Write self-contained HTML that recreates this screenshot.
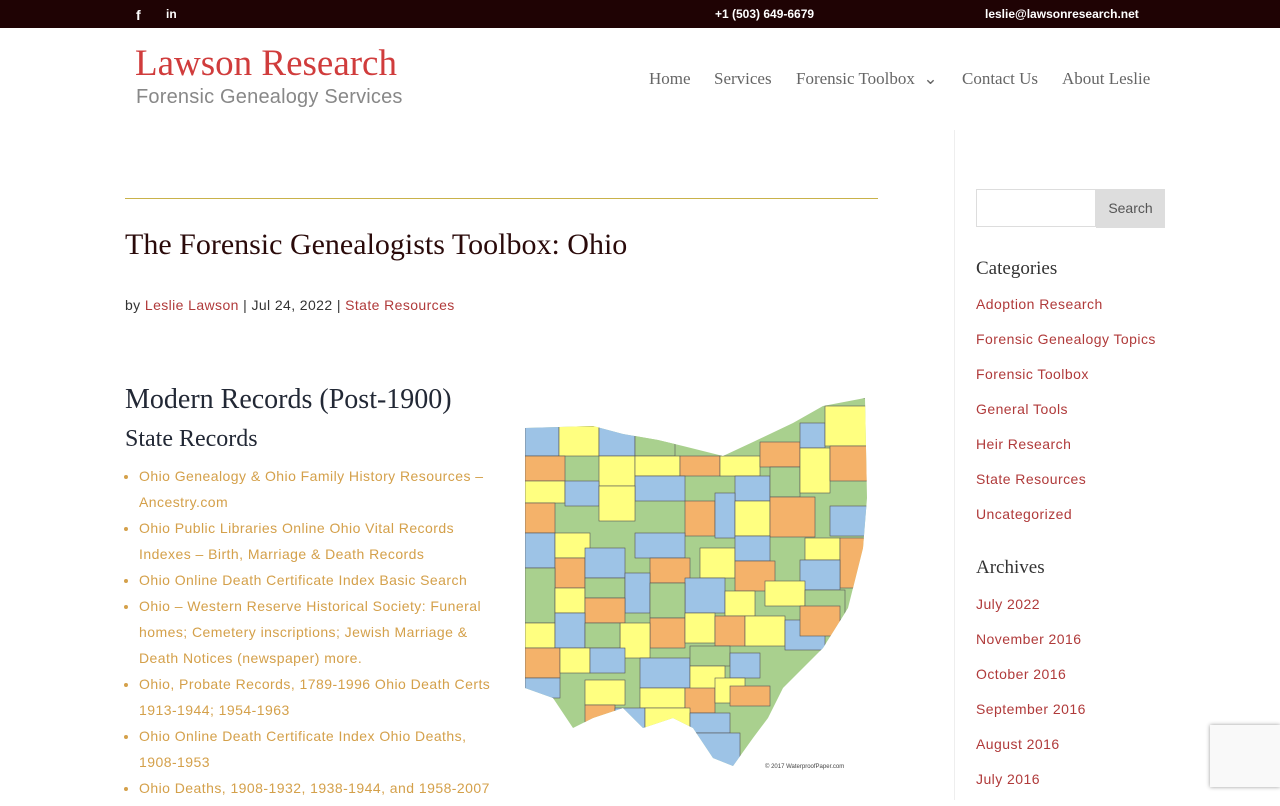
<!DOCTYPE html>
<html><head><meta charset="utf-8"><style>
body{margin:0;background:#fff;font-family:"Liberation Sans",sans-serif;width:1280px;height:800px;overflow:hidden;position:relative}
.top{position:absolute;left:0;top:0;width:1280px;height:28px;background:#1f0304;color:#fff;font-size:12px;font-weight:bold}
.top span{position:absolute;top:7px}
.serif{font-family:"Liberation Serif",serif}
.logo1{position:absolute;left:135px;top:42px;font-size:37px;color:#d03c3c}
.logo2{position:absolute;left:136px;top:86px;font-size:20px;color:#888;letter-spacing:0.2px}
.nav{position:absolute;top:69px;font-size:17px;color:#666}
.rule{position:absolute;left:125px;top:198px;width:753px;height:1px;background:#c9b24a}
h1{position:absolute;left:125px;top:228px;margin:0;font-weight:normal;font-size:30px;color:#2a0a0a}
.meta{position:absolute;left:125px;top:297px;font-size:14px;color:#333;letter-spacing:0.4px}
.meta a{color:#b03a3a}
h2{position:absolute;left:125px;top:384px;margin:0;font-weight:normal;font-size:28px;color:#222835}
h3{position:absolute;left:125px;top:426px;margin:0;font-weight:normal;font-size:24px;color:#222835}
ul{position:absolute;left:125px;top:463px;margin:0;padding:0 0 0 14px;width:352px;font-size:14px;line-height:26px;color:#333;letter-spacing:0.45px}
ul li{color:#d4a04a;list-style:disc}
.side{position:absolute;left:954px;top:130px;width:1px;height:670px;background:#eee}
.sb{position:absolute;left:976px}
.sb a{display:block;color:#b03a3a;font-size:14px;height:35px;letter-spacing:0.45px}
.sh{font-size:19px;color:#333}
</style></head><body>
<div class="top"><span style="left:136px;font-size:14px;font-weight:900">f</span><span style="left:166px;font-weight:900">in</span><span style="left:715px">+1 (503) 649-6679</span><span style="left:985px">leslie@lawsonresearch.net</span></div>
<div class="logo1 serif">Lawson Research</div>
<div class="logo2">Forensic Genealogy Services</div>
<div class="nav serif" style="left:649px">Home</div>
<div class="nav serif" style="left:714px">Services</div>
<div class="nav serif" style="left:796px">Forensic Toolbox &nbsp;⌄</div>
<div class="nav serif" style="left:962px">Contact Us</div>
<div class="nav serif" style="left:1062px">About Leslie</div>
<div class="rule"></div>
<h1 class="serif">The Forensic Genealogists Toolbox: Ohio</h1>
<div class="meta">by <a>Leslie Lawson</a> | Jul 24, 2022 | <a>State Resources</a></div>
<h2 class="serif">Modern Records (Post-1900)</h2>
<h3 class="serif">State Records</h3>
<ul>
<li>Ohio Genealogy &amp; Ohio Family History Resources – Ancestry.com</li>
<li>Ohio Public Libraries Online Ohio Vital Records Indexes – Birth, Marriage &amp; Death Records</li>
<li>Ohio Online Death Certificate Index Basic Search</li>
<li>Ohio – Western Reserve Historical Society: Funeral homes; Cemetery inscriptions; Jewish Marriage &amp; Death Notices (newspaper) more.</li>
<li>Ohio, Probate Records, 1789-1996 Ohio Death Certs 1913-1944; 1954-1963</li>
<li>Ohio Online Death Certificate Index Ohio Deaths, 1908-1953</li>
<li>Ohio Deaths, 1908-1932, 1938-1944, and 1958-2007</li>
</ul>
<svg style="position:absolute;left:523px;top:398px" width="346" height="374">
<defs><clipPath id="oh"><polygon points="2,30 70,28 100,36 135,42 160,48 200,58 230,44 270,25 300,8 342,0 344,100 340,150 325,210 300,250 280,270 260,290 245,320 230,340 210,368 190,360 170,330 150,320 120,330 100,310 70,320 50,330 30,300 2,290"/></clipPath></defs>
<g clip-path="url(#oh)" stroke="#555" stroke-width="0.6">
<rect x="0" y="0" width="346" height="374" fill="#a9d08e"/>
<rect x="2" y="28" width="34" height="30" fill="#9dc3e6"/><rect x="36" y="28" width="40" height="30" fill="#ffff80"/><rect x="76" y="28" width="36" height="30" fill="#9dc3e6"/><rect x="112" y="36" width="40" height="22" fill="#a9d08e"/>
<rect x="2" y="58" width="40" height="25" fill="#f4b26a"/><rect x="76" y="58" width="36" height="30" fill="#ffff80"/><rect x="112" y="58" width="45" height="20" fill="#ffff80"/><rect x="157" y="58" width="40" height="20" fill="#f4b26a"/><rect x="197" y="58" width="40" height="20" fill="#ffff80"/><rect x="237" y="44" width="40" height="25" fill="#f4b26a"/><rect x="277" y="25" width="25" height="25" fill="#9dc3e6"/><rect x="302" y="8" width="44" height="40" fill="#ffff80"/>
<rect x="2" y="83" width="40" height="22" fill="#ffff80"/><rect x="42" y="83" width="34" height="25" fill="#9dc3e6"/><rect x="112" y="78" width="50" height="25" fill="#9dc3e6"/><rect x="212" y="78" width="35" height="25" fill="#9dc3e6"/><rect x="247" y="69" width="30" height="30" fill="#a9d08e"/><rect x="277" y="50" width="30" height="45" fill="#ffff80"/><rect x="307" y="48" width="39" height="35" fill="#f4b26a"/>
<rect x="2" y="105" width="30" height="30" fill="#f4b26a"/><rect x="76" y="88" width="36" height="35" fill="#ffff80"/><rect x="162" y="103" width="30" height="35" fill="#f4b26a"/><rect x="192" y="95" width="20" height="45" fill="#9dc3e6"/><rect x="212" y="103" width="35" height="35" fill="#ffff80"/><rect x="247" y="99" width="45" height="40" fill="#f4b26a"/><rect x="307" y="108" width="39" height="30" fill="#9dc3e6"/>
<rect x="2" y="135" width="30" height="35" fill="#9dc3e6"/><rect x="32" y="135" width="35" height="25" fill="#ffff80"/><rect x="112" y="135" width="50" height="25" fill="#9dc3e6"/><rect x="177" y="150" width="35" height="30" fill="#ffff80"/><rect x="212" y="138" width="35" height="25" fill="#9dc3e6"/><rect x="282" y="140" width="35" height="22" fill="#ffff80"/><rect x="317" y="140" width="25" height="50" fill="#f4b26a"/>
<rect x="32" y="160" width="30" height="30" fill="#f4b26a"/><rect x="62" y="150" width="40" height="30" fill="#9dc3e6"/><rect x="127" y="160" width="40" height="25" fill="#f4b26a"/><rect x="212" y="163" width="40" height="30" fill="#f4b26a"/><rect x="277" y="162" width="40" height="30" fill="#9dc3e6"/>
<rect x="2" y="170" width="30" height="55" fill="#a9d08e"/><rect x="32" y="190" width="30" height="25" fill="#ffff80"/><rect x="62" y="180" width="40" height="20" fill="#a9d08e"/><rect x="102" y="175" width="25" height="40" fill="#9dc3e6"/><rect x="162" y="180" width="40" height="35" fill="#9dc3e6"/><rect x="202" y="193" width="30" height="25" fill="#ffff80"/><rect x="242" y="183" width="40" height="25" fill="#ffff80"/><rect x="282" y="192" width="40" height="30" fill="#a9d08e"/>
<rect x="62" y="200" width="40" height="25" fill="#f4b26a"/><rect x="127" y="185" width="35" height="35" fill="#a9d08e"/><rect x="127" y="220" width="35" height="30" fill="#f4b26a"/><rect x="162" y="215" width="30" height="30" fill="#ffff80"/><rect x="192" y="218" width="30" height="30" fill="#f4b26a"/><rect x="222" y="218" width="40" height="30" fill="#ffff80"/><rect x="262" y="222" width="40" height="30" fill="#9dc3e6"/><rect x="277" y="208" width="40" height="30" fill="#f4b26a"/>
<rect x="2" y="225" width="30" height="25" fill="#ffff80"/><rect x="32" y="215" width="30" height="35" fill="#9dc3e6"/><rect x="97" y="225" width="30" height="35" fill="#ffff80"/><rect x="62" y="225" width="35" height="25" fill="#a9d08e"/>
<rect x="2" y="250" width="35" height="30" fill="#f4b26a"/><rect x="37" y="250" width="30" height="25" fill="#ffff80"/><rect x="67" y="250" width="35" height="25" fill="#9dc3e6"/><rect x="117" y="260" width="50" height="30" fill="#9dc3e6"/><rect x="167" y="248" width="40" height="20" fill="#a9d08e"/><rect x="207" y="255" width="30" height="25" fill="#9dc3e6"/><rect x="167" y="268" width="35" height="25" fill="#ffff80"/>
<rect x="2" y="280" width="35" height="20" fill="#9dc3e6"/><rect x="62" y="282" width="40" height="25" fill="#ffff80"/><rect x="117" y="290" width="45" height="20" fill="#ffff80"/><rect x="162" y="290" width="30" height="25" fill="#f4b26a"/><rect x="192" y="280" width="30" height="25" fill="#ffff80"/><rect x="207" y="288" width="40" height="20" fill="#f4b26a"/>
<rect x="62" y="307" width="30" height="30" fill="#f4b26a"/><rect x="92" y="310" width="30" height="30" fill="#9dc3e6"/><rect x="122" y="310" width="45" height="25" fill="#ffff80"/><rect x="167" y="315" width="40" height="20" fill="#9dc3e6"/><rect x="167" y="335" width="50" height="35" fill="#9dc3e6"/>
</g>
<text x="242" y="370" font-size="6" fill="#444" font-family="Liberation Sans">© 2017 WaterproofPaper.com</text>
</svg>
<div class="side"></div>
<div style="position:absolute;left:976px;top:189px;width:120px;height:38px;border:1px solid #ddd;box-sizing:border-box"></div>
<div style="position:absolute;left:1096px;top:189px;width:69px;height:39px;background:#ddd;color:#555;font-size:14px;text-align:center;line-height:39px">Search</div>
<div class="sb serif sh" style="top:258px">Categories</div>
<div class="sb" style="top:296px"><a>Adoption Research</a><a>Forensic Genealogy Topics</a><a>Forensic Toolbox</a><a>General Tools</a><a>Heir Research</a><a>State Resources</a><a>Uncategorized</a></div>
<div class="sb serif sh" style="top:557px">Archives</div>
<div class="sb" style="top:596px"><a>July 2022</a><a>November 2016</a><a>October 2016</a><a>September 2016</a><a>August 2016</a><a>July 2016</a></div>
<div style="position:absolute;left:1210px;top:725px;width:70px;height:62px;background:#f9f9f9;box-shadow:0 0 4px #999"></div>
</body></html>
